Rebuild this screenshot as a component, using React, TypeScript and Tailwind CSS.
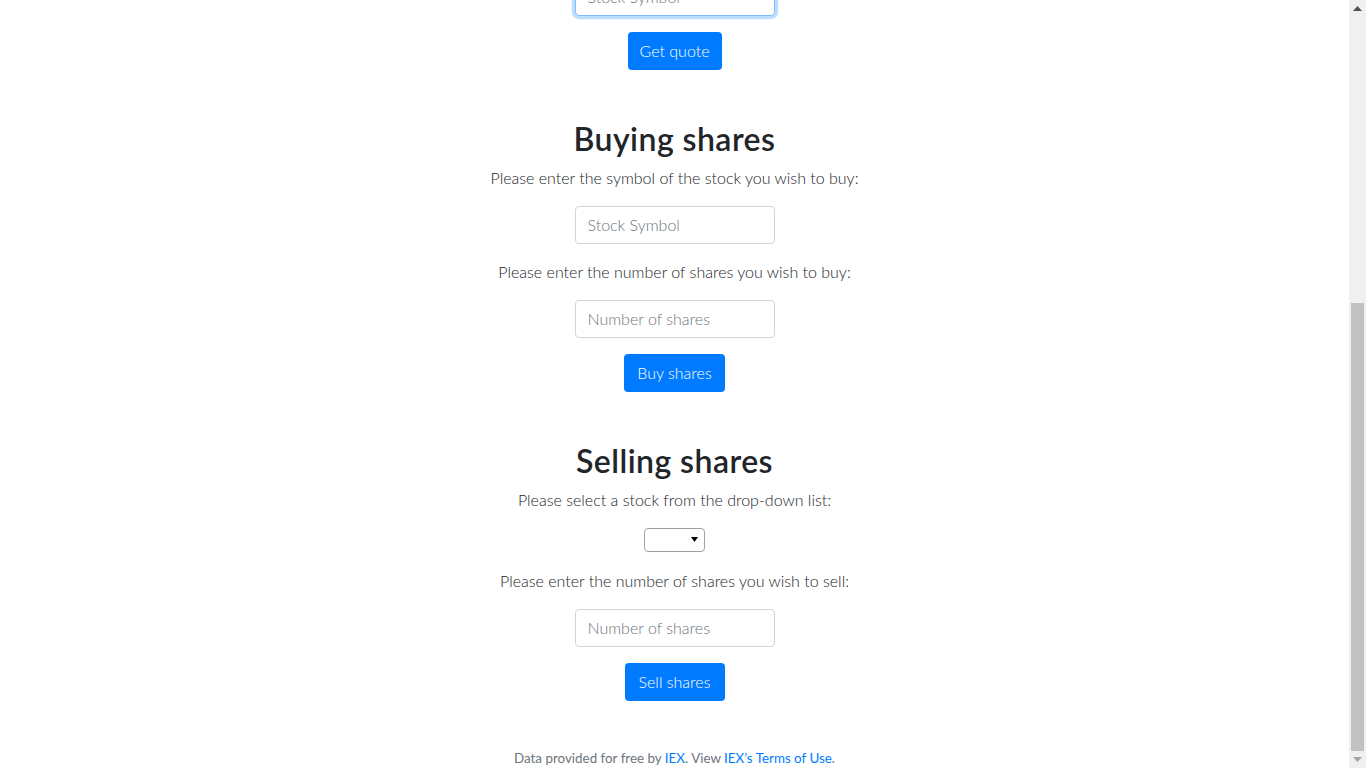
const font = { fontFamily: '"Segoe UI", Lato, "Liberation Sans", sans-serif' }

function TextInput({ placeholder, focused }: { placeholder: string; focused?: boolean }) {
  return (
    <input
      type="text"
      placeholder={placeholder}
      autoComplete="off"
      className={
        focused
          ? 'h-[38px] w-[200px] rounded border border-[#80bdff] bg-white px-3 text-base font-light text-[#495057] shadow-[0_0_0_0.2rem_rgba(0,123,255,0.25)] outline-none placeholder:text-[#6c757d]'
          : 'h-[38px] w-[200px] rounded border border-[#ced4da] bg-white px-3 text-base font-light text-[#495057] outline-none placeholder:text-[#6c757d]'
      }
    />
  )
}

function Button({ label, width }: { label: string; width: string }) {
  return (
    <button
      type="submit"
      className={`h-[38px] ${width} rounded bg-[#007bff] text-base font-light text-white`}
    >
      {label}
    </button>
  )
}

function Para({ children }: { children: string }) {
  return (
    <p className="mb-4 text-base leading-6 font-light text-[#212529]">
      {children}
    </p>
  )
}

function Scrollbar() {
  return (
    <div className="flex h-screen w-[17px] shrink-0 flex-col bg-[#f0f0f0]">
      <div className="flex h-[17px] items-center justify-center">
        <svg width="9" height="5" viewBox="0 0 9 5">
          <path d="M0 5 L4.5 0 L9 5 Z" fill="#505050" />
        </svg>
      </div>
      <div className="flex flex-1 flex-col justify-end px-[2px]">
        <div className="h-[448px] bg-[#c1c1c1]" />
      </div>
      <div className="flex h-[17px] items-center justify-center">
        <svg width="9" height="5" viewBox="0 0 9 5">
          <path d="M0 0 L4.5 5 L9 0 Z" fill="#a3a3a3" />
        </svg>
      </div>
    </div>
  )
}

export default function App() {
  return (
    <div className="flex h-screen overflow-hidden bg-white" style={font}>
      <div className="flex min-w-0 flex-1 flex-col justify-end overflow-hidden">
        <main className="flex flex-col items-center px-12 pb-12 text-center">
          <div className="mb-4">
            <TextInput placeholder="Stock Symbol" focused />
          </div>
          <Button label="Get quote" width="w-[94px]" />

          <h2 className="mt-[50px] mb-2 text-[32px] font-semibold leading-[38px] tracking-[0.45px] text-[#212529]">
            Buying shares
          </h2>
          <Para>Please enter the symbol of the stock you wish to buy:</Para>
          <div className="mb-4">
            <TextInput placeholder="Stock Symbol" />
          </div>
          <Para>Please enter the number of shares you wish to buy:</Para>
          <div className="mb-4">
            <TextInput placeholder="Number of shares" />
          </div>
          <Button label="Buy shares" width="w-[101px]" />

          <h2 className="mt-[50px] mb-2 text-[32px] font-semibold leading-[38px] tracking-[0.45px] text-[#212529]">
            Selling shares
          </h2>
          <Para>Please select a stock from the drop-down list:</Para>
          <div className="mb-[17px] flex h-6 w-[61px] items-center justify-end rounded-sm border border-[#a0a0a0] bg-white pr-[6px]">
            <svg width="7" height="5" viewBox="0 0 7 5">
              <path d="M0 0 L3.5 5 L7 0 Z" fill="#000" />
            </svg>
          </div>
          <Para>Please enter the number of shares you wish to sell:</Para>
          <div className="mb-4">
            <TextInput placeholder="Number of shares" />
          </div>
          <Button label="Sell shares" width="w-[100px]" />
        </main>
        <footer className="text-center text-[13.4px] leading-[19.2px] text-[#6c757d]">
          Data provided for free by <a className="text-[#007bff]" href="#">IEX</a>. View{' '}
          <a className="text-[#007bff]" href="#">IEX’s Terms of Use</a>.
        </footer>
      </div>
      <Scrollbar />
    </div>
  )
}
